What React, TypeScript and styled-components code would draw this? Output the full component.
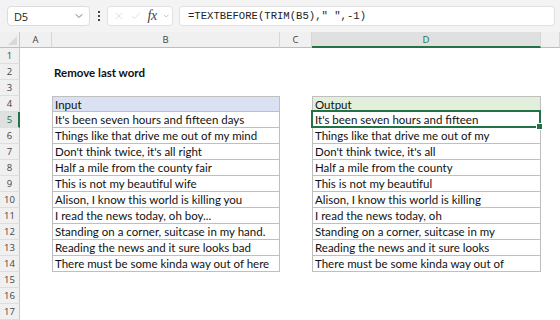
import React from "react";
import styled, { createGlobalStyle, css } from "styled-components";
import { ChevronDown, X, Check } from "lucide-react";

const Global = createGlobalStyle`
  html, body { margin: 0; padding: 0; background: #ffffff; }
  body { width: 560px; height: 320px; overflow: hidden; font-family: "Open Sans", "Noto Sans", sans-serif; }
`;

const GREEN = "#217346";

const Page = styled.div`
  width: 560px;
  height: 320px;
  display: flex;
  flex-direction: column;
  background: #fff;
  overflow: hidden;
`;

const FormulaBar = styled.div`
  height: 32px;
  flex: none;
  display: flex;
  align-items: center;
  padding: 0 5px 0 7px;
  gap: 0;
  background: #f3f3f3;
  box-sizing: border-box;
`;

const NameBox = styled.div`
  width: 83px;
  height: 20px;
  box-sizing: border-box;
  background: #fff;
  border: 1px solid #dcdcdc;
  border-radius: 4px;
  display: flex;
  align-items: center;
  justify-content: space-between;
  padding: 0 4px 0 6px;
  font-size: 11px;
  color: #222;
  letter-spacing: -0.3px;
`;

const Dots = styled.div`
  width: 17px;
  display: flex;
  flex-direction: column;
  align-items: center;
  gap: 2px;
  span {
    width: 2px;
    height: 2px;
    background: #444;
  }
`;

const FxBox = styled.div`
  width: 66px;
  height: 20px;
  box-sizing: border-box;
  background: #fff;
  border: 1px solid #e2e2e2;
  border-radius: 4px;
  display: flex;
  align-items: center;
  padding: 0 2px 0 5px;
  gap: 5px;
  color: #c4c4c4;
`;

const Fx = styled.span`
  font-family: "Liberation Serif", "DejaVu Serif", serif;
  font-style: italic;
  font-size: 14px;
  color: #444;
  margin-left: 1px;
  letter-spacing: -0.5px;
`;

const FormulaInput = styled.div`
  flex: 1;
  margin-left: 6px;
  height: 20px;
  box-sizing: border-box;
  background: #fff;
  border: 1px solid #e2e2e2;
  border-radius: 4px;
  display: flex;
  align-items: center;
  padding-left: 8px;
  font-family: "Liberation Mono", "DejaVu Sans Mono", monospace;
  font-size: 10.6px;
  color: #222;
  white-space: pre;
`;

const Sheet = styled.div`
  display: grid;
  grid-template-columns: 20px 32px 228px 32px 229px 1fr;
  grid-auto-rows: 16px;
`;

const ColHead = styled.div<{ $sel?: boolean }>`
  box-sizing: border-box;
  background: ${(p) => (p.$sel ? "#e0e0e0" : "#f0f0f0")};
  border-right: 1px solid #d6d6d6;
  border-bottom: ${(p) => (p.$sel ? `2px solid ${GREEN}` : "1px solid #bdbdbd")};
  color: ${(p) => (p.$sel ? GREEN : "#444")};
  font-size: 9.5px;
  display: flex;
  align-items: center;
  justify-content: center;
  padding-top: ${(p) => (p.$sel ? "1px" : "0")};
`;

const Corner = styled.div`
  box-sizing: border-box;
  background: #f0f0f0;
  border-right: 1px solid #c8c8c8;
  border-bottom: 1px solid #bdbdbd;
  position: relative;
  &::after {
    content: "";
    position: absolute;
    right: 2px;
    bottom: 2px;
    width: 0;
    height: 0;
    border-left: 9px solid transparent;
    border-bottom: 9px solid #d9d9d9;
  }
`;

const RowHead = styled.div<{ $sel?: boolean }>`
  box-sizing: border-box;
  background: ${(p) => (p.$sel ? "#e0e0e0" : "#f0f0f0")};
  border-right: ${(p) => (p.$sel ? `2px solid ${GREEN}` : "1px solid #c8c8c8")};
  border-bottom: 1px solid #dedede;
  color: ${(p) => (p.$sel ? GREEN : "#444")};
  font-size: 9.5px;
  display: flex;
  align-items: center;
  justify-content: center;
  padding-left: ${(p) => (p.$sel ? "1px" : "0")};
`;

type Kind = "blank" | "title" | "inHead" | "outHead" | "body";

const Cell = styled.div<{ $kind: Kind; $first?: boolean; $active?: boolean }>`
  box-sizing: border-box;
  position: relative;
  font-family: "Lato", "Open Sans", sans-serif;
  font-size: 11.5px;
  color: #111;
  white-space: nowrap;
  overflow: visible;
  display: flex;
  align-items: center;
  padding-left: 2px;
  ${(p) =>
    p.$kind === "title" &&
    css`
      font-weight: 700;
    `}
  ${(p) =>
    (p.$kind === "inHead" || p.$kind === "outHead" || p.$kind === "body") &&
    css`
      border-left: 1px solid #bfbfbf;
      border-right: 1px solid #bfbfbf;
      border-bottom: 1px solid #bfbfbf;
    `}
  ${(p) =>
    (p.$kind === "inHead" || p.$kind === "outHead") &&
    css`
      border-top: 1px solid #bfbfbf;
    `}
  ${(p) =>
    p.$kind === "inHead" &&
    css`
      background: #d9e1f2;
    `}
  ${(p) =>
    p.$kind === "outHead" &&
    css`
      background: #e2efda;
    `}
  ${(p) =>
    p.$active &&
    css`
      &::after {
        content: "";
        position: absolute;
        left: -2px;
        top: -2px;
        right: -1px;
        bottom: -1px;
        border: 2px solid ${GREEN};
        pointer-events: none;
      }
      &::before {
        content: "";
        position: absolute;
        right: -3px;
        bottom: -3px;
        width: 5px;
        height: 5px;
        background: ${GREEN};
        border: 1px solid #fff;
        z-index: 2;
      }
    `}
`;

const inputs = [
  "It's been seven hours and fifteen days",
  "Things like that drive me out of my mind",
  "Don't think twice, it's all right",
  "Half a mile from the county fair",
  "This is not my beautiful wife",
  "Alison, I know this world is killing you",
  "I read the news today, oh boy...",
  "Standing on a corner, suitcase in my hand.",
  "Reading the news and it sure looks bad",
  "There must be some kinda way out of here",
];

const removeLast = (s: string) => {
  const t = s.trim();
  const i = t.lastIndexOf(" ");
  return i < 0 ? t : t.slice(0, i);
};

const cols = ["A", "B", "C", "D", ""];

export default function App() {
  const rows: React.ReactNode[] = [];
  for (let r = 1; r <= 17; r++) {
    let b: { kind: Kind; text: string } = { kind: "blank", text: "" };
    let d: { kind: Kind; text: string } = { kind: "blank", text: "" };
    if (r === 2) b = { kind: "title", text: "Remove last word" };
    if (r === 4) {
      b = { kind: "inHead", text: "Input" };
      d = { kind: "outHead", text: "Output" };
    }
    if (r >= 5 && r <= 14) {
      b = { kind: "body", text: inputs[r - 5] };
      d = { kind: "body", text: removeLast(inputs[r - 5]) };
    }
    rows.push(
      <React.Fragment key={r}>
        <RowHead $sel={r === 5}>{r}</RowHead>
        <Cell $kind="blank" />
        <Cell $kind={b.kind}>{b.text}</Cell>
        <Cell $kind="blank" />
        <Cell $kind={d.kind} $active={r === 5}>
          {d.text}
        </Cell>
        <Cell $kind="blank" />
      </React.Fragment>
    );
  }

  return (
    <Page>
      <Global />
      <FormulaBar>
        <NameBox>
          D5
          <ChevronDown size={12} color="#555" strokeWidth={1.6} />
        </NameBox>
        <Dots>
          <span />
          <span />
          <span />
        </Dots>
        <FxBox>
          <X size={14} strokeWidth={1.1} />
          <Check size={14} strokeWidth={1.1} />
          <Fx>fx</Fx>
          <ChevronDown size={10} color="#888" strokeWidth={1.4} />
        </FxBox>
        <FormulaInput>{'=TEXTBEFORE(TRIM(B5)," ",-1)'}</FormulaInput>
      </FormulaBar>
      <Sheet>
        <Corner />
        {cols.map((c, i) => (
          <ColHead key={i} $sel={c === "D"}>
            {c}
          </ColHead>
        ))}
        {rows}
      </Sheet>
    </Page>
  );
}
